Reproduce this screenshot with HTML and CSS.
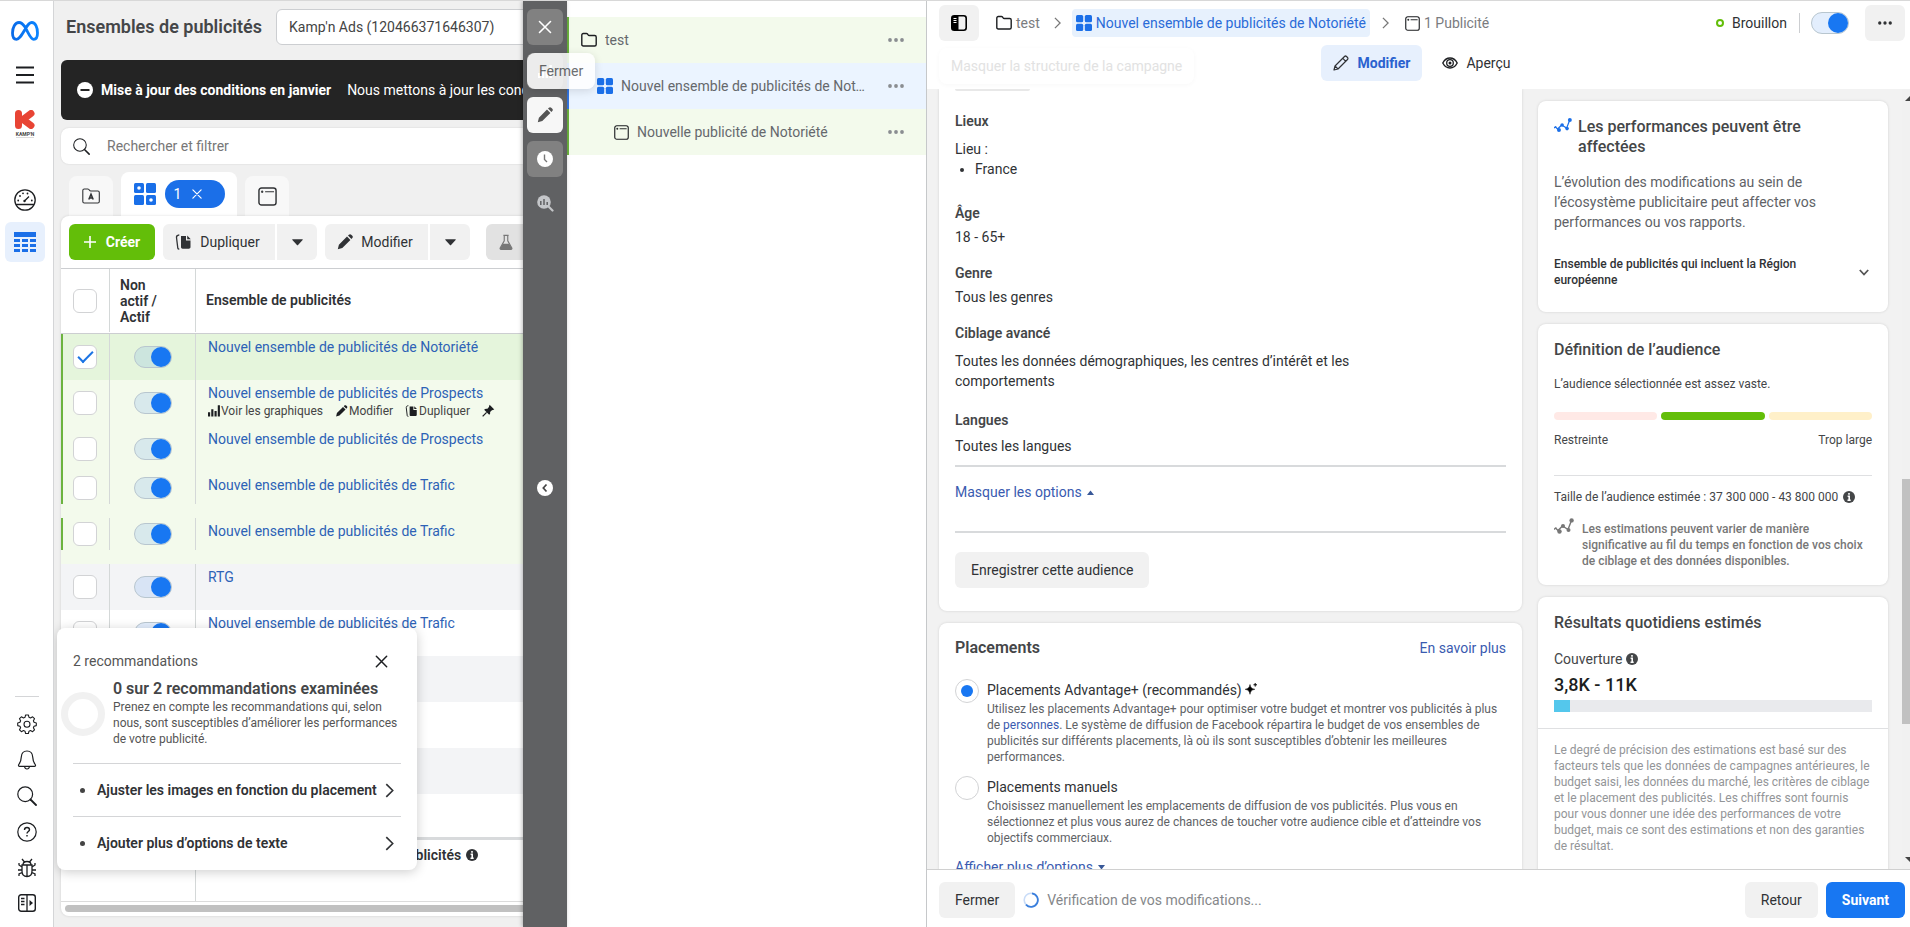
FILE: index.html
```html
<!DOCTYPE html>
<html lang="fr">
<head>
<meta charset="utf-8">
<title>Ensembles de publicités</title>
<link rel="stylesheet" href="styles.css">
</head>
<body>
<svg class="sprite" aria-hidden="true">
  <symbol id="i-x" viewBox="0 0 16 16"><path d="M2.5 2.5l11 11M13.5 2.5l-11 11" fill="none" stroke="currentColor" stroke-width="1.6" stroke-linecap="round"/></symbol>
  <symbol id="i-search" viewBox="0 0 20 20"><circle cx="8.200" cy="8.200" r="7.400" fill="none" stroke="currentColor" stroke-width="1.200"/><path d="M13.500 13.500l5.500 5.500" stroke="currentColor" stroke-width="1.800" stroke-linecap="round"/></symbol>
  <symbol id="i-folder" viewBox="0 0 16 16"><path d="M.8 3c0-.9.6-1.5 1.5-1.5h3.2c.9 0 1.2.4 1.5 1.1.3.6.6.9 1.3.9h5.4c.9 0 1.5.6 1.5 1.5v7.500c0 .9-.6 1.500-1.500 1.500H2.300c-.9 0-1.500-.6-1.500-1.500z" fill="none" stroke="currentColor" stroke-width="1.400"/></symbol>
  <symbol id="i-folder-a" viewBox="0 0 18 18"><path d="M.8 3.500c0-1 .5-1.500 1.500-1.500h3.500c1 0 1.300.4 1.700 1.200.3.600.6.800 1.300.8h7c1 0 1.500.5 1.500 1.500v9c0 1-.5 1.500-1.500 1.500H2.300c-1 0-1.500-.5-1.500-1.500z" fill="none" stroke="currentColor" stroke-width="1.100"/><path d="M6.800 12.500L9 7.200l2.200 5.300M7.600 11h2.800" fill="none" stroke="currentColor" stroke-width="1.500"/></symbol>
  <symbol id="i-grid" viewBox="0 0 16 16"><g fill="currentColor"><rect width="7.200" height="7.200" rx="1.500"/><rect x="8.800" width="7.200" height="7.200" rx="1.500"/><rect y="8.800" width="7.200" height="7.200" rx="1.500"/><rect x="8.800" y="8.800" width="7.200" height="7.200" rx="1.500"/></g></symbol>
  <symbol id="i-grid-dot" viewBox="0 0 22 22"><g fill="currentColor"><rect width="10" height="10" rx="1.500"/><rect x="12" width="10" height="10" rx="1.500"/><rect y="12" width="10" height="10" rx="1.500"/><rect x="12" y="12" width="10" height="10" rx="1.500"/></g><circle cx="5" cy="5" r="1.800" fill="#fff"/><circle cx="17" cy="17" r="1.800" fill="#fff"/></symbol>
  <symbol id="i-ad" viewBox="0 0 16 16"><rect x=".8" y=".8" width="14.400" height="14.400" rx="2.200" fill="none" stroke="currentColor" stroke-width="1.200"/><path d="M6 4h7.500M2.500 4h2M3.500 3v2" stroke="currentColor" stroke-width="1"/></symbol>
  <symbol id="i-pencil" viewBox="0 0 16 16"><path d="M.8 15.200l1.100-4.500L10 2.600 13.400 6l-8.100 8.100zM11 1.600l.9-.9c.7-.7 1.700-.7 2.300 0l1.100 1.100c.7.700.7 1.700 0 2.300l-.9.900z" fill="currentColor"/></symbol>
  <symbol id="i-pencil-o" viewBox="0 0 16 16"><path d="M1 15l1-4L11.500 1.500c.6-.6 1.400-.6 2 0l1 1c.6.6.6 1.400 0 2L5 14zM9.800 3.300l3 3M2 11l3 3" fill="none" stroke="currentColor" stroke-width="1.200" stroke-linejoin="round"/></symbol>
  <symbol id="i-copy" viewBox="0 0 16 16"><path d="M5.500 2h5v4.500H15V13c0 1-.7 1.700-1.700 1.700H7.200c-1 0-1.700-.7-1.700-1.700zM11.700 1.500l3.600 3.800h-3.600z" fill="currentColor"/><path d="M3.800.9C1.800 1.200.8 2 1 3.500l1.300 10.700c.1.700.6 1 1.500 1" fill="none" stroke="currentColor" stroke-width="1.300"/></symbol>
  <symbol id="i-down" viewBox="0 0 12 8"><path d="M.6 1h10.800c.4 0 .5.4.2.700L6.600 7.300c-.3.400-.9.400-1.200 0L.4 1.700C.1 1.400.2 1 .6 1z" fill="currentColor"/></symbol>
  <symbol id="i-flask" viewBox="0 0 16 18"><path d="M5 .9h6M6 1v6L1.500 15c-.6 1.200 0 2 1.200 2h10.600c1.200 0 1.800-.8 1.200-2L10 7V1" fill="none" stroke="currentColor" stroke-width="1.300"/><path d="M4.300 10.500h7.400l3 5c.4 1-.2 1.500-1.400 1.500H2.700c-1.200 0-1.800-.6-1.400-1.500z" fill="currentColor"/></symbol>
  <symbol id="i-bars" viewBox="0 0 14 14"><path d="M0 9h2.500v5H0zM3.800 5.500h2.500V14H3.800zM7.600 7.500h2.500V14H7.600zM11.400 1h2.500v13h-2.500z" fill="currentColor"/></symbol>
  <symbol id="i-pin" viewBox="0 0 14 14"><path d="M8.200.8l5 5-1.500.6-1 .2-2 2c.3 1.400 0 2.300-1 3.100L2.300 6.300C3.200 5.300 4.200 5 5.500 5.300l2-2 .1-1z" fill="currentColor"/><path d="M5 9l-4.300 4.300" stroke="currentColor" stroke-width="1.300"/></symbol>
  <symbol id="i-info" viewBox="0 0 12 12"><circle cx="6" cy="6" r="6" fill="currentColor"/><path d="M6 2v1.800M4.600 5.200H6.200V9.500M4.500 9.300h3.200" fill="none" stroke="#fff" stroke-width="1.600"/></symbol>
  <symbol id="i-dots" viewBox="0 0 16 4"><g fill="currentColor"><circle cx="2" cy="2" r="1.900"/><circle cx="8" cy="2" r="1.900"/><circle cx="14" cy="2" r="1.900"/></g></symbol>
  <symbol id="i-right" viewBox="0 0 8 14"><path d="M1 1l6 6-6 6" fill="none" stroke="currentColor" stroke-width="1.500"/></symbol>
  <symbol id="i-trend" viewBox="0 0 20 16"><path d="M0 11.500l1.500-1.500 1 .5M4 12.500L8.500 8l5.500 3.500L17.500 2.500" fill="none" stroke="currentColor" stroke-width="1.400"/><path d="M1.500 10l3 3" stroke="currentColor" stroke-width="1.400"/><circle cx="5.500" cy="13.500" r="2.200" fill="currentColor"/><circle cx="9" cy="8" r="2" fill="currentColor"/><circle cx="14.500" cy="12" r="2" fill="currentColor"/><circle cx="17.600" cy="2.400" r="2.200" fill="currentColor"/></symbol>
</svg>

<nav class="rail" aria-label="Navigation">
  <div class="rail-top">
    <a class="rail-link meta" href="#" aria-label="Meta"><svg width="28" height="20" viewBox="0 0 28 20"><defs><linearGradient id="mg" x1="0" x2="1"><stop offset="0" stop-color="#0a6be8"/><stop offset="1" stop-color="#0a84ff"/></linearGradient></defs><path d="M14 6C12 3 10 1.500 8 1.500c-4 0-6.500 5-6.500 10.500 0 4 1.500 6.300 4 6.300 2.600 0 4.500-3 8.500-9.800 2-3.600 3.700-7 6.800-7 3.600 0 5.700 5 5.700 10.500 0 4-1.300 6.300-3.800 6.300C19.500 18.300 17.500 12 14 6z" fill="none" stroke="url(#mg)" stroke-width="2.800"/></svg></a>
    <button class="rail-link menu" aria-label="Menu"><svg width="18" height="18" viewBox="0 0 18 18"><path d="M0 1.500h18M0 9h18M0 16.500h18" stroke="#1c1e21" stroke-width="1.800"/></svg></button>
    <a class="rail-link logo" href="#" aria-label="Kamp'n"><svg width="20" height="19" viewBox="0 0 20 19"><path d="M3.500 3.500v12M16 3.500L8 9.500l8 6" fill="none" stroke="#e84434" stroke-width="7" stroke-linecap="round" stroke-linejoin="round"/></svg><span>KAMP'N</span></a>
    <a class="rail-link gauge" href="#" aria-label="Vue d'ensemble"><svg width="22" height="22" viewBox="0 0 22 22"><circle cx="11" cy="11" r="10.200" fill="none" stroke="#1c1e21" stroke-width="1.300"/><path d="M2 15.500h18M10.500 12l4.500-4.500" stroke="#1c1e21" stroke-width="1.300"/><circle cx="10.500" cy="12" r="1.200" fill="#1c1e21"/><g fill="#1c1e21"><circle cx="4.200" cy="11.500" r=".9"/><circle cx="17.800" cy="11.500" r=".9"/><circle cx="6" cy="7" r=".9"/><circle cx="9" cy="4.300" r=".9"/><circle cx="13.500" cy="4.500" r=".9"/></g></svg></a>
    <a class="rail-link current" href="#" aria-label="Campagnes"><svg width="22" height="20" viewBox="0 0 22 20"><path d="M0 0h22v5H0zM0 7h6v3H0zM8 7h6v3H8zM16 7h6v3h-6zM0 12h6v3H0zM8 12h6v3H8zM16 12h6v3h-6zM0 17h6v3H0zM8 17h6v3H8zM16 17h6v3h-6z" fill="#1b6fe8"/></svg></a>
  </div>
  <div class="rail-bottom">
    <button aria-label="Paramètres"><svg width="20" height="20" viewBox="0 0 20 20"><path d="M8.600 1h2.800l.6 2.300 1.500.6 2.100-1.100 1.900 1.900-1.100 2.100.6 1.500 2.300.7v2.600l-2.300.6-.6 1.500 1.100 2.100-1.900 1.900-2.100-1.100-1.500.6-.6 2.300H8.600L8 17.200l-1.500-.6-2.100 1.100-1.900-1.900 1.100-2.100-.6-1.500-2.300-.6V9l2.300-.7.6-1.500-1.100-2.100 1.900-1.900 2.100 1.100L8 3.300z" fill="none" stroke="#1c1e21" stroke-width="1.100" stroke-linejoin="round"/><circle cx="10" cy="10.200" r="3" fill="none" stroke="#1c1e21" stroke-width="1.100"/></svg></button>
    <button aria-label="Notifications"><svg width="20" height="20" viewBox="0 0 20 20"><path d="M10 1c-3.500 0-5.500 2.500-5.700 6-.2 4-1 5.500-2.500 7.500-.6.900-.3 1.800.8 1.800h14.800c1.100 0 1.400-.9.800-1.800-1.500-2-2.300-3.500-2.500-7.500C15.500 3.500 13.500 1 10 1zM7.500 16.500c.3 1.700 1.100 2.500 2.500 2.500s2.200-.8 2.500-2.500" fill="none" stroke="#1c1e21" stroke-width="1.200"/></svg></button>
    <button aria-label="Rechercher"><svg width="20" height="20"><use href="#i-search"/></svg></button>
    <button aria-label="Aide"><svg width="20" height="20" viewBox="0 0 20 20"><circle cx="10" cy="10" r="9.200" fill="none" stroke="#1c1e21" stroke-width="1.200"/><path d="M7.500 8c0-1.500 1-2.500 2.500-2.500s2.500 1 2.500 2.300c0 1.700-2.500 1.700-2.500 3.700M10 13v1.600" fill="none" stroke="#1c1e21" stroke-width="1.400"/></svg></button>
    <button aria-label="Signaler un problème"><svg width="20" height="20" viewBox="0 0 20 20"><path d="M5 7h10v6c0 3.500-2 5.500-5 5.500S5 16.500 5 13zM6 7c0-2.300 1.600-3.500 4-3.500S14 4.700 14 7M10 7v11.500M5 1l2.500 3M15 1l-2.500 3M5 9L2 7V5M15 9l3-2V5M1 12h4M15 12h4M5 14.500l-3 1.500v2M15 14.500l3 1.500v2" fill="none" stroke="#1c1e21" stroke-width="1.300"/></svg></button>
    <button aria-label="Développer"><svg width="18" height="18" viewBox="0 0 18 18"><rect x=".7" y=".7" width="16.600" height="16.600" rx="2.500" fill="none" stroke="#1c1e21" stroke-width="1.400"/><path d="M9 1v16M3 4.500h3.500M3 7.500h3.500M3 10.500h3.500" stroke="#1c1e21" stroke-width="1.300"/><path d="M11.500 6l3.500 3-3.500 3z" fill="#1c1e21"/></svg></button>
  </div>
</nav>

<section class="manager">
  <header class="manager-head">
    <h1>Ensembles de publicités</h1>
    <select aria-label="Compte publicitaire"><option>Kamp'n Ads (120466371646307)</option></select>
  </header>
  <div class="notice">
    <svg width="16" height="16" viewBox="0 0 16 16"><circle cx="8" cy="8" r="8" fill="#fff"/><path d="M3.500 8h9" stroke="#242424" stroke-width="2"/></svg>
    <strong>Mise à jour des conditions en janvier</strong>
    <span>Nous mettons à jour les conditions</span>
  </div>
  <label class="searchbox"><svg width="17" height="17"><use href="#i-search"/></svg><input type="text" placeholder="Rechercher et filtrer" aria-label="Rechercher et filtrer"></label>
  <div class="levels">
    <button class="level" aria-label="Campagnes"><svg width="18" height="18"><use href="#i-folder-a"/></svg></button>
    <div class="level on"><svg width="22" height="22"><use href="#i-grid-dot"/></svg><button class="count">1 <svg width="12" height="12"><use href="#i-x"/></svg></button></div>
    <button class="level" aria-label="Publicités"><svg width="19" height="19"><use href="#i-ad"/></svg></button>
  </div>
  <div class="board">
    <div class="toolbar">
      <button class="create"><svg width="12" height="12" viewBox="0 0 12 12"><path d="M6 0v12M0 6h12" stroke="#fff" stroke-width="1.600"/></svg>Créer</button>
      <div class="split"><button class="dup"><svg width="17" height="16"><use href="#i-copy"/></svg>Dupliquer</button><button class="caret" aria-label="Options de duplication"><svg width="11" height="8"><use href="#i-down"/></svg></button></div>
      <div class="split"><button class="mod"><svg width="16" height="16"><use href="#i-pencil"/></svg>Modifier</button><button class="caret" aria-label="Options de modification"><svg width="11" height="8"><use href="#i-down"/></svg></button></div>
      <button class="test" aria-label="Test A/B"><svg width="14" height="17"><use href="#i-flask"/></svg></button>
    </div>
    <div class="rows">
      <table>
        <colgroup><col class="c-check"><col class="c-state"><col></colgroup>
        <thead><tr><th><div class="cell"><input type="checkbox" aria-label="Tout sélectionner"></div></th><th><div class="cell state">Non<br>actif /<br>Actif</div></th><th><div class="headname">Ensemble de publicités</div></th></tr></thead>
        <tbody>
          <tr class="draft picked"><td><div class="cell"><input type="checkbox" checked aria-label="Sélectionner"></div></td><td><div class="cell"><input type="checkbox" class="toggle" checked aria-label="Actif"></div></td><td><a href="#">Nouvel ensemble de publicités de Notoriété</a></td></tr>
          <tr class="draft"><td><div class="cell"><input type="checkbox" aria-label="Sélectionner"></div></td><td><div class="cell"><input type="checkbox" class="toggle" checked aria-label="Actif"></div></td><td><a href="#">Nouvel ensemble de publicités de Prospects</a><div class="quick"><button><svg width="12" height="13"><use href="#i-bars"/></svg>Voir les graphiques</button><button><svg width="13" height="12"><use href="#i-pencil"/></svg>Modifier</button><button><svg width="13" height="12"><use href="#i-copy"/></svg>Dupliquer</button><button aria-label="Épingler"><svg width="13" height="13"><use href="#i-pin"/></svg></button></div></td></tr>
          <tr class="draft"><td><div class="cell"><input type="checkbox" aria-label="Sélectionner"></div></td><td><div class="cell"><input type="checkbox" class="toggle" checked aria-label="Actif"></div></td><td><a href="#">Nouvel ensemble de publicités de Prospects</a></td></tr>
          <tr class="draft short"><td><div class="cell"><input type="checkbox" aria-label="Sélectionner"></div></td><td><div class="cell"><input type="checkbox" class="toggle" checked aria-label="Actif"></div></td><td><a href="#">Nouvel ensemble de publicités de Trafic</a></td></tr>
          <tr class="draft short"><td><div class="cell"><input type="checkbox" aria-label="Sélectionner"></div></td><td><div class="cell"><input type="checkbox" class="toggle" checked aria-label="Actif"></div></td><td><a href="#">Nouvel ensemble de publicités de Trafic</a></td></tr>
          <tr class="alt"><td><div class="cell"><input type="checkbox" aria-label="Sélectionner"></div></td><td><div class="cell"><input type="checkbox" class="toggle" checked aria-label="Actif"></div></td><td><a href="#">RTG</a></td></tr>
          <tr><td><div class="cell"><input type="checkbox" aria-label="Sélectionner"></div></td><td><div class="cell"><input type="checkbox" class="toggle" checked aria-label="Actif"></div></td><td><a href="#">Nouvel ensemble de publicités de Trafic</a></td></tr>
          <tr class="alt"><td><div class="cell"></div></td><td><div class="cell"></div></td><td></td></tr>
          <tr><td><div class="cell"></div></td><td><div class="cell"></div></td><td></td></tr>
          <tr class="alt"><td><div class="cell"></div></td><td><div class="cell"></div></td><td></td></tr>
          <tr><td><div class="cell"></div></td><td><div class="cell"></div></td><td></td></tr>
        </tbody>
      </table>
    </div>
    <div class="total"><div class="total-name"><span>Résultats de 10 ensembles de publicités</span><svg width="12" height="12"><use href="#i-info"/></svg></div></div>
    <div class="hscroll"><div></div></div>
  </div>
  <aside class="tips">
    <div class="tips-head"><span>2 recommandations</span><button aria-label="Fermer les recommandations"><svg width="15" height="15"><use href="#i-x"/></svg></button></div>
    <div class="tips-body"><div class="ring"></div><div><h2>0 sur 2 recommandations examinées</h2><p>Prenez en compte les recommandations qui, selon nous, sont susceptibles d’améliorer les performances de votre publicité.</p></div></div>
    <ul>
      <li><button><i></i><span>Ajuster les images en fonction du placement</span><svg width="9" height="15"><use href="#i-right"/></svg></button></li>
      <li><button><i></i><span>Ajouter plus d’options de texte</span><svg width="9" height="15"><use href="#i-right"/></svg></button></li>
    </ul>
  </aside>
</section>

<div class="strip">
  <button class="sbtn" aria-label="Fermer"><svg width="16" height="16"><use href="#i-x"/></svg></button>
  <button class="sbtn" aria-label="Graphiques"><svg width="14" height="14"><use href="#i-bars"/></svg></button>
  <button class="sbtn active" aria-label="Modifier"><svg width="16" height="16"><use href="#i-pencil"/></svg></button>
  <button class="sbtn" aria-label="Historique"><svg width="16" height="16" viewBox="0 0 16 16"><circle cx="8" cy="8" r="8" fill="#fff"/><path d="M7.500 3.500V8.500l2.500 2.500" fill="none" stroke="#777" stroke-width="1.400"/></svg></button>
  <button class="sbtn bare" aria-label="Inspecter"><svg width="17" height="17" viewBox="0 0 17 17"><circle cx="7" cy="7" r="6.800" fill="#c4c6c9"/><path d="M11.500 11.500l4 4" stroke="#c4c6c9" stroke-width="2.200" stroke-linecap="round"/><path d="M3.800 6v4M7 4v6M10.200 7v3" stroke="#606163" stroke-width="1.500"/></svg></button>
  <button class="collapse" aria-label="Réduire"><svg width="16" height="16" viewBox="0 0 16 16"><circle cx="8" cy="8" r="8" fill="#fff"/><path d="M9.500 4.500L6.300 8l3.200 3.500" fill="none" stroke="#444" stroke-width="1.700"/></svg></button>
  <div class="hint" role="tooltip">Fermer</div>
</div>

<section class="tree">
  <div class="node"><svg width="16" height="16"><use href="#i-folder"/></svg><span>test</span><button aria-label="Plus"><svg width="16" height="4"><use href="#i-dots"/></svg></button></div>
  <div class="node l2"><svg width="16" height="16"><use href="#i-grid"/></svg><span>Nouvel ensemble de publicités de Notoriété</span><button aria-label="Plus"><svg width="16" height="4"><use href="#i-dots"/></svg></button></div>
  <div class="node l3"><svg width="15" height="15"><use href="#i-ad"/></svg><span>Nouvelle publicité de Notoriété</span><button aria-label="Plus"><svg width="16" height="4"><use href="#i-dots"/></svg></button></div>
</section>

<main class="editor">
  <header class="ed-head">
    <div class="crumbs">
      <button class="side" aria-label="Masquer la structure de la campagne"><svg width="16" height="16" viewBox="0 0 16 16"><rect x=".8" y=".8" width="14.400" height="14.400" rx="2.500" fill="none" stroke="#000" stroke-width="1.600"/><path d="M1 1h6.500v14H1z" fill="#000"/><path d="M2.500 3.500h3M2.500 5.500h3M2.500 7.500h3" stroke="#fff"/></svg></button>
      <a class="crumb" href="#"><svg width="16" height="16"><use href="#i-folder"/></svg>test</a>
      <svg class="sep" width="7" height="12"><use href="#i-right"/></svg>
      <a class="crumb here" href="#"><svg width="16" height="16"><use href="#i-grid"/></svg>Nouvel ensemble de publicités de Notoriété</a>
      <svg class="sep" width="7" height="12"><use href="#i-right"/></svg>
      <a class="crumb" href="#"><svg width="15" height="15"><use href="#i-ad"/></svg>1 Publicité</a>
      <div class="status"><i></i><span>Brouillon</span><input type="checkbox" class="toggle" checked aria-label="Activer l'ensemble"><button class="side" aria-label="Plus d'options"><svg width="14" height="4"><use href="#i-dots"/></svg></button></div>
    </div>
    <div class="modes"><button class="mode on"><svg width="16" height="16"><use href="#i-pencil-o"/></svg>Modifier</button><button class="mode"><svg width="16" height="12" viewBox="0 0 16 12"><path d="M.8 6C2.500 2.700 5 1 8 1s5.500 1.700 7.200 5C13.500 9.300 11 11 8 11S2.500 9.300.8 6z" fill="none" stroke="#1c1e21" stroke-width="1.400"/><circle cx="8" cy="6" r="3.300" fill="none" stroke="#1c1e21" stroke-width="1.300"/><circle cx="8" cy="6" r="1.500" fill="#1c1e21"/></svg>Aperçu</button></div>
    <div class="ghost" role="tooltip">Masquer la structure de la campagne</div>
  </header>
  <div class="ed-body">
    <div class="form">
      <section class="card audience">
        <div class="remnant"></div>
        <h3>Lieux</h3>
        <p class="gap-m">Lieu :</p>
        <ul><li>France</li></ul>
        <h3 class="gap-xl">Âge</h3>
        <p class="gap-s">18 - 65+</p>
        <h3 class="gap-l">Genre</h3>
        <p class="gap-s">Tous les genres</p>
        <h3 class="gap-l">Ciblage avancé</h3>
        <p class="gap-m narrow">Toutes les données démographiques, les centres d’intérêt et les comportements</p>
        <h3 class="gap-n">Langues</h3>
        <p class="gap-t">Toutes les langues</p>
        <hr>
        <a class="options" href="#">Masquer les options <svg width="7" height="5" viewBox="0 0 7 5"><path d="M0 5l3.500-4.500L7 5z" fill="#385898"/></svg></a>
        <hr>
        <button class="btn save">Enregistrer cette audience</button>
      </section>
      <section class="card places">
        <div class="card-head"><h2>Placements</h2><a href="#">En savoir plus</a></div>
        <div class="choice"><input type="radio" name="pl" id="pl1" checked><div><label for="pl1">Placements Advantage+ (recommandés) <svg width="12" height="12" viewBox="0 0 12 12"><path d="M5 1.500c.6 3 1.500 4 4.800 4.800C6.500 7 5.600 8 5 11.300 4.400 8 3.400 7 .2 6.300 3.400 5.500 4.400 4.500 5 1.500zM10.200 0c.2 1.200.5 1.500 1.800 1.800-1.300.3-1.600.6-1.800 1.800-.2-1.200-.5-1.500-1.700-1.800 1.200-.3 1.500-.6 1.700-1.800z" fill="#000" stroke="#000" stroke-width=".5"/></svg></label><p>Utilisez les placements Advantage+ pour optimiser votre budget et montrer vos publicités à plus de <a href="#">personnes</a>. Le système de diffusion de Facebook répartira le budget de vos ensembles de publicités sur différents placements, là où ils sont susceptibles d’obtenir les meilleures performances.</p></div></div>
        <div class="choice"><input type="radio" name="pl" id="pl2"><div><label for="pl2">Placements manuels</label><p>Choisissez manuellement les emplacements de diffusion de vos publicités. Plus vous en sélectionnez et plus vous aurez de chances de toucher votre audience cible et d’atteindre vos objectifs commerciaux.</p></div></div>
        <a class="more" href="#">Afficher plus d’options <svg width="7" height="5" viewBox="0 0 7 5"><path d="M0 0l3.500 4.500L7 0z" fill="#385898"/></svg></a>
      </section>
    </div>
    <aside class="insights">
      <section class="card perf">
        <div class="perf-title"><svg width="18" height="16"><use href="#i-trend"/></svg><h2>Les performances peuvent être affectées</h2></div>
        <p class="perf-text">L’évolution des modifications au sein de l’écosystème publicitaire peut affecter vos performances ou vos rapports.</p>
        <button class="fold"><span>Ensemble de publicités qui incluent la Région européenne</span><svg width="10" height="7" viewBox="0 0 10 7"><path d="M.8 1L5 5.500 9.200 1" fill="none" stroke="#555" stroke-width="1.800"/></svg></button>
      </section>
      <section class="card def">
        <h2>Définition de l’audience</h2>
        <p>L’audience sélectionnée est assez vaste.</p>
        <div class="meter"><i class="m1"></i><i class="m2"></i><i class="m3"></i></div>
        <div class="ends"><span>Restreinte</span><span>Trop large</span></div>
        <div class="size"><span>Taille de l’audience estimée : 37 300 000 - 43 800 000</span><svg width="12" height="12"><use href="#i-info"/></svg></div>
        <div class="vary"><svg width="20" height="16"><use href="#i-trend"/></svg><p>Les estimations peuvent varier de manière significative au fil du temps en fonction de vos choix de ciblage et des données disponibles.</p></div>
      </section>
      <section class="card daily">
        <div class="daily-top">
          <h2>Résultats quotidiens estimés</h2>
          <div class="reach">Couverture <svg width="12" height="12"><use href="#i-info"/></svg></div>
          <div class="value">3,8K - 11K</div>
          <div class="bar"><i></i></div>
        </div>
        <p class="fine">Le degré de précision des estimations est basé sur des facteurs tels que les données de campagnes antérieures, le budget saisi, les données du marché, les critères de ciblage et le placement des publicités. Les chiffres sont fournis pour vous donner une idée des performances de votre budget, mais ce sont des estimations et non des garanties de résultat.</p>
      </section>
    </aside>
    <div class="vscroll"><svg width="10" height="5" viewBox="0 0 10 5"><path d="M0 5l5-5 5 5z" fill="#444"/></svg><i></i><svg width="10" height="5" viewBox="0 0 10 5"><path d="M0 0l5 5 5-5z" fill="#444"/></svg></div>
  </div>
  <footer class="ed-foot">
    <button class="btn">Fermer</button>
    <svg class="spin" width="16" height="16" viewBox="0 0 16 16"><circle cx="8" cy="8" r="6.800" fill="none" stroke="#c9dcf8" stroke-width="1.600"/><path d="M9 1.300A6.800 6.800 0 1 1 3 12.600" fill="none" stroke="#3b7fdc" stroke-width="1.800"/></svg>
    <span>Vérification de vos modifications...</span>
    <button class="btn back">Retour</button>
    <button class="btn next">Suivant</button>
  </footer>
</main>
</body>
</html>
```
FILE: styles.css
```css
* { box-sizing: border-box; }
body { margin: 0; height: 100vh; display: flex; overflow: hidden; border-top: 1px solid #d8d8d8; background: #fff; color: #303235; font: 14px/20px Roboto, sans-serif; }
h1, h2, h3, p, ul { margin: 0; padding: 0; }
p { font-weight: 400; }
a { color: #385898; text-decoration: none; }
button { border: 0; padding: 0; background: none; font: inherit; color: inherit; text-align: left; }
svg { flex: none; }
.sprite { position: absolute; width: 0; height: 0; }
.btn { display: flex; align-items: center; height: 36px; padding: 0 16px; border-radius: 6px; background: #f1f1f1; }

/* left rail */
.rail { flex: 0 0 54px; display: flex; flex-direction: column; justify-content: space-between; border-right: 1px solid #d4d5d7; color: #1c1e21; }
.rail-top { display: flex; flex-direction: column; align-items: center; width: 50px; padding-top: 20px; }
.rail-link { display: flex; flex-direction: column; align-items: center; }
.menu { margin-top: 25px; }
.logo { margin-top: 26px; }
.logo span { margin-top: 2px; font-size: 5px; line-height: 6px; font-weight: 700; color: #444; border-bottom: 1px solid #ddd; }
.gauge { margin-top: 51px; }
.current { justify-content: center; width: 40px; height: 40px; margin-top: 11px; border-radius: 6px; background: #e7f0fd; }
.rail-bottom { display: flex; flex-direction: column; align-items: center; align-self: center; gap: 16px; padding: 17px 2px 15px; border-top: 1px solid #d4d5d7; }
.rail-bottom button { display: flex; }

/* ads manager */
.manager { position: relative; flex: 0 0 469px; display: flex; flex-direction: column; padding: 7px 0 11px 7px; overflow: hidden; background: #f0f0f0; }
.manager-head { display: flex; align-items: center; gap: 14px; padding: 1px 0 0 5px; }
h1 { font-size: 18px; line-height: 24px; white-space: nowrap; flex: none; font-weight: 600; color: #444648; }
select { appearance: none; flex: 0 0 400px; height: 36px; padding: 0 12px; border: 1px solid #ccced1; border-radius: 6px; background: #fff; font: inherit; color: #444; }
.notice { display: flex; align-items: center; gap: 8px; height: 60px; margin-top: 15px; padding-left: 16px; border-radius: 6px 0 0 6px; background: #242424; color: #fff; white-space: nowrap; }
.notice strong { margin-right: 8px; font-weight: 700; }
.searchbox { display: flex; align-items: center; gap: 17px; height: 36px; margin-top: 8px; padding-left: 12px; border-radius: 8px 0 0 8px; background: #fff; box-shadow: 0 0 2px #0002; color: #1c1e21; }
.searchbox input { flex: 1; min-width: 0; border: 0; outline: 0; padding: 0; background: none; font: inherit; }
.searchbox input::placeholder { color: #777; }
.levels { display: flex; align-items: flex-end; gap: 8px; margin-top: 8px; padding-left: 8px; color: #303235; }
.level { display: flex; align-items: center; justify-content: center; width: 44px; height: 40px; border-radius: 8px 8px 0 0; background: #f8f8f8; }
.level.on { width: 116px; height: 44px; gap: 9px; background: #fff; color: #1a6fe8; }
.count { display: flex; align-items: center; gap: 10px; width: 60px; height: 28px; padding-left: 9px; border-radius: 14px; background: #1b6fe8; color: #fff; }
.board { flex: 1; min-height: 0; display: flex; flex-direction: column; border-radius: 8px 0 0 8px; background: #fff; box-shadow: 0 0 3px #0002; }
.toolbar { display: flex; gap: 8px; padding: 8px; border-bottom: 1px solid #ccced1; }
.toolbar button { flex: none; display: flex; align-items: center; justify-content: center; gap: 8px; height: 36px; background: #f1f1f1; border-radius: 6px; }
.toolbar .create { width: 86px; gap: 10px; background: #63be09; color: #fff; font-weight: 700; }
.split { display: flex; flex: none; gap: 2px; }
.toolbar .dup { width: 112px; padding-right: 3px; border-radius: 6px 0 0 6px; }
.toolbar .mod { width: 103px; padding-right: 3px; border-radius: 6px 0 0 6px; }
.toolbar .caret { width: 40px; border-radius: 0 6px 6px 0; }
.toolbar .test { width: 110px; margin-left: 8px; padding-left: 13px; justify-content: flex-start; background: #e2e2e2; color: #777; }
.rows { flex: 1; min-height: 0; overflow: hidden; }
table { width: 100%; border-collapse: collapse; table-layout: fixed; }
.c-check { width: 49px; }
.c-state { width: 86px; }
th, td { padding: 0; vertical-align: top; text-align: left; font-weight: 600; }
thead tr { height: 64px; border-bottom: 1px solid #ccced1; }
thead .cell { height: 63px; }
.cell { display: flex; align-items: center; justify-content: center; height: 46px; border-right: 1px solid #d4d8d8; }
.state { justify-content: flex-start; padding-left: 10px; line-height: 16px; }
.headname { padding: 21px 10px; }
tbody tr { height: 46px; }
.draft { background: #f3faec; }
.draft td:first-child .cell { padding-right: 2px; border-left: 2px solid #6cb33f; }
.picked { background: #e5f5dc; }
.short .cell { height: 32px; }
.alt { background: #f3f4f6; }
td:nth-child(3) { padding: 3px 0 0 12px; font-weight: 400; white-space: nowrap; }
td a { display: block; color: #2d62b6; }
.quick { display: flex; gap: 12px; height: 16px; font-size: 12px; line-height: 12px; color: #444; }
.quick button { display: flex; align-items: center; gap: 1px; }
.quick svg { color: #1c1e21; }
input[type=checkbox], input[type=radio] { appearance: none; flex: none; display: flex; align-items: center; justify-content: center; width: 24px; height: 24px; margin: 0; border: 1px solid #d2d3d5; border-radius: 6px; background: #fff; }
input[type=checkbox]:checked:not(.toggle)::before { content: ""; width: 13px; height: 6px; margin-bottom: 4px; border: solid #1b74e4; border-width: 0 0 2px 2px; transform: rotate(-45deg); }
input[type=checkbox].toggle { justify-content: flex-end; width: 38px; height: 22px; border: 1px solid #b8c6cf; border-radius: 11px; background: #1877f21f; }
.toggle::before { content: ""; width: 20px; height: 20px; border-radius: 50%; background: #1877f2; }
.total { height: 65px; padding-left: 134px; border-top: 3px solid #d8dadc; border-bottom: 1px solid #dcdcdc; }
.total-name { display: flex; align-items: center; height: 61px; gap: 5px; padding: 0 0 32px 12px; border-left: 1px solid #d4d8d8; font-weight: 600; white-space: nowrap; }
.hscroll { padding: 3px 0 4px 4px; }
.hscroll div { height: 7px; border-radius: 4px 0 0 4px; background: #c1c1c1; }

/* recommendations popup */
.tips { position: absolute; left: 3px; bottom: 57px; width: 360px; height: 242px; padding: 23px 16px 0; border-radius: 8px; background: #fff; box-shadow: 0 2px 12px #0003; }
.tips-head { display: flex; align-items: center; justify-content: space-between; padding-right: 12px; color: #555; }
.tips-head button { display: flex; color: #1c1e21; }
.tips-body { display: flex; gap: 8px; margin: 8px -8px 0 -12px; padding-bottom: 16px; }
.ring { flex: none; width: 44px; height: 44px; margin-top: 13px; border: 7px solid #f1f1f1; border-radius: 50%; }
.tips h2 { font-size: 16px; line-height: 20px; font-weight: 600; color: #444648; white-space: nowrap; }
.tips p { font-size: 12px; line-height: 16px; color: #555; }
.tips ul { list-style: none; }
.tips li { border-top: 1px solid #d4d5d7; }
.tips li button { display: flex; align-items: center; width: 100%; height: 52px; padding: 0 7px; font-weight: 600; white-space: nowrap; }
.tips i { width: 5px; height: 5px; margin-right: 12px; border-radius: 50%; background: #444; }
.tips li span { flex: 1; }

/* dark strip */
.strip { position: relative; z-index: 2; flex: 0 0 44px; display: flex; flex-direction: column; align-items: center; gap: 8px; padding-top: 8px; background: #606163; box-shadow: -1px 0 4px #0004; color: #fff; }
.sbtn { display: flex; align-items: center; justify-content: center; width: 36px; height: 36px; border-radius: 6px; background: #818181; }
.sbtn.active { background: #f7f7f7; color: #555; }
.sbtn.bare { background: none; }
.collapse { display: flex; margin-top: 251px; }
.hint { position: absolute; top: 52px; left: 4px; padding: 8px 12px; border-radius: 8px; background: #fffffff0; box-shadow: 0 2px 8px #0002; color: #606163; opacity: .9; }

/* campaign tree */
.tree { flex: 0 0 360px; min-width: 0; padding-top: 16px; border-right: 1px solid #c6c8ca; }
.node { display: flex; align-items: center; gap: 8px; height: 46px; padding: 0 22px 0 12px; border-left: 2px solid #6cb33f; background: #f3faec; color: #65686c; }
.node span { flex: 1; min-width: 0; overflow: hidden; text-overflow: ellipsis; white-space: nowrap; }
.node > svg { color: #1c1e21; }
.node button { display: flex; margin-left: 12px; color: #8a8d91; }
.node.l2 { padding-left: 28px; border-color: #3578e5; background: #ebf4ff; }
.node.l2 > svg { color: #1b6fe8; }
.node.l3 { padding-left: 45px; }

/* editor */
.editor { flex: 1; min-width: 0; display: flex; flex-direction: column; }
.ed-head { position: relative; flex: none; height: 88px; padding: 4px 5px 0 12px; }
.crumbs { display: flex; align-items: center; height: 36px; white-space: nowrap; }
.side { display: flex; align-items: center; justify-content: center; width: 40px; height: 36px; border-radius: 6px; background: #f1f1f1; }
.crumb { display: flex; align-items: center; gap: 4px; color: #7a7c7f; }
.crumb svg { color: #1c1e21; }
.side + .crumb { margin-left: 17px; }
.crumb.here { height: 28px; padding: 0 4px; border-radius: 4px; background: #e7f1fd; color: #2a6bd8; }
.crumb.here svg { color: #1b6fe8; }
.sep { margin: 0 11px 0 14px; color: #777; }
.here + .sep { margin: 0 16px 0 12px; }
.status { display: flex; align-items: center; margin-left: auto; }
.status i { width: 8px; height: 8px; margin-right: 8px; border: 2px solid #63be09; border-radius: 50%; }
.status span { padding-right: 12px; border-right: 1px solid #ccced1; }
.status .toggle { margin: 0 16px 0 11px; }
.modes { display: flex; justify-content: center; gap: 8px; margin-top: 4px; }
.mode { display: flex; align-items: center; gap: 8px; height: 36px; padding: 0 12px; border-radius: 6px; }
.mode.on { background: #e7f0fd; font-weight: 700; color: #2a62cf; }
.mode.on svg { color: #303235; }
.ghost { position: absolute; left: 12px; top: 47px; padding: 8px 12px; border-radius: 8px; box-shadow: 0 1px 5px #00000008; color: #e2e2e2; }
.ed-body { flex: 1; min-height: 0; display: flex; overflow: hidden; background: #f2f2f2; }
.form { flex: 1; min-width: 0; padding-left: 12px; }
.card { border-radius: 8px; background: #fff; box-shadow: 0 0 3px #0002; }
.form .card { padding: 0 16px; }
.form .audience { padding-bottom: 23px; border-radius: 0 0 8px 8px; }
.remnant { width: 75px; height: 2px; margin-bottom: 20px; border-radius: 0 0 3px 3px; background: #e8e8e8; }
h3 { font-size: 14px; font-weight: 600; color: #444648; }
.gap-s { margin-top: 4px; }
.gap-t { margin-top: 6px; }
.gap-m { margin-top: 8px; }
.gap-l { margin-top: 16px; }
.gap-n { margin-top: 19px; }
.gap-xl { margin-top: 24px; }
.audience ul { padding-left: 20px; }
.narrow { max-width: 420px; }
hr { height: 2px; margin: 9px 0 15px; border: 0; background: #d8dadc; }
.options { display: flex; align-items: center; gap: 5px; margin-bottom: 29px; color: #3a5bb0; }
.save { margin-top: 19px; }
.places { margin-top: 12px; }
.card-head { display: flex; justify-content: space-between; padding: 15px 0 21px; }
.card h2 { font-size: 16px; line-height: 20px; font-weight: 500; color: #444648; }
.card-head h2 { font-weight: 600; }
.card-head a, .more, .choice a { color: #3a5bb0; }
.choice { display: flex; gap: 8px; margin-bottom: 11px; }
input[type=radio] { border-radius: 50%; }
input[type=radio]:checked::before { content: ""; width: 12px; height: 12px; border-radius: 50%; background: #1877f2; }
.choice label { display: block; line-height: 22px; }
.choice p { font-size: 12px; line-height: 16px; color: #606266; }
.more { display: flex; align-items: center; gap: 5px; height: 20px; }
.insights { flex: 0 0 350px; margin: 12px 14px 0 16px; display: flex; flex-direction: column; gap: 12px; color: #444648; }
.insights .card { flex: none; }
.perf { padding: 16px 16px 24px; }
.perf-title { display: flex; gap: 6px; color: #1b6fe8; }
.perf-text { margin: 15px 0 24px; color: #606266; }
.fold { display: flex; align-items: center; justify-content: space-between; width: 100%; padding-right: 3px; font-size: 12px; line-height: 16px; font-weight: 500; color: #303235; }
.fold span { max-width: 260px; }
.def { padding: 16px; font-size: 12px; }
.def > p { margin-top: 14px; }
.meter { display: flex; gap: 4px; margin-top: 18px; }
.meter i { flex: 1; height: 8px; border-radius: 4px; }
.m1 { background: #ffe9e6; }
.m2 { background: #63be09; }
.m3 { background: #fff0c9; }
.ends { display: flex; justify-content: space-between; padding: 10px 0 25px; border-bottom: 1px solid #dfe0e2; }
.size { display: flex; align-items: center; gap: 5px; padding: 11px 0; }
.vary { display: flex; gap: 8px; color: #777; }
.vary p { line-height: 16px; font-weight: 500; margin-top: 3px; }
.daily-top { padding: 16px; border-bottom: 1px solid #dfe0e2; }
.reach { display: flex; align-items: center; gap: 4px; margin-top: 16px; }
.value { margin: 4px 0 3px; font-size: 18px; line-height: 24px; font-weight: 500; color: #1c1e21; }
.bar { height: 12px; background: #e9eaed; }
.bar i { display: block; width: 5%; height: 100%; background: #54c7ec; }
.fine { padding: 13px 16px 40px; font-size: 12px; line-height: 16px; color: #939598; }
.vscroll { flex: 0 0 8px; display: flex; flex-direction: column; align-items: flex-start; padding: 7px 0; overflow: hidden; background: #f1f1f1; }
.vscroll svg { margin-left: 3px; }
.vscroll i { width: 8px; height: 32%; margin: auto 0 133px; background: #c1c1c1; }
.ed-foot { flex: none; display: flex; align-items: center; height: 58px; padding: 2px 5px 0 12px; border-top: 1px solid #d0d0d0; }
.spin { margin: 0 8px; }
.ed-foot span { color: #85878a; }
.back { margin-left: auto; margin-right: 8px; }
.next { background: #1877f2; color: #fff; font-weight: 700; }
```
